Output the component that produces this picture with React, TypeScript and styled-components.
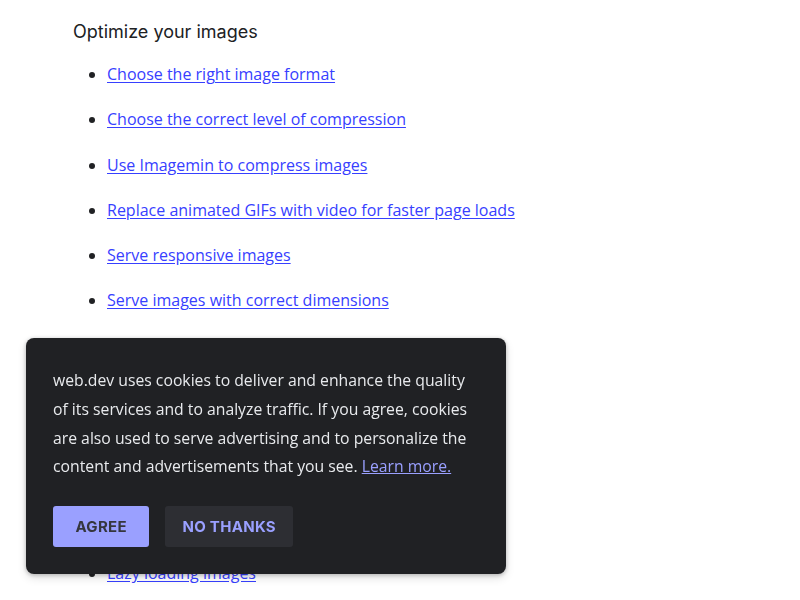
import styled, { createGlobalStyle } from 'styled-components';

const GlobalStyle = createGlobalStyle`
  html, body {
    margin: 0;
    padding: 0;
    background: #ffffff;
  }
  body {
    font-family: 'Open Sans', 'Noto Sans', sans-serif;
    color: #202124;
  }
`;

const Page = styled.main`
  padding: 19px 0 0 73px;
  height: 600px;
  box-sizing: border-box;
  overflow: hidden;
`;

const Section = styled.section<{ offset?: number }>`
  margin-top: ${(p) => p.offset ?? 0}px;
`;

const Heading = styled.h2`
  margin: 0;
  font-family: 'Inter', 'Roboto', sans-serif;
  font-size: 18px;
  font-weight: 400;
  line-height: 26px;
  color: #202124;
`;

const List = styled.ul`
  margin: 16px 0 0;
  padding-left: 34px;
  list-style: disc;
`;

const Item = styled.li`
  font-size: 16px;
  line-height: 26px;
  margin-bottom: 19.3px;
  &::marker {
    color: #202124;
  }
`;

const Link = styled.a`
  color: #3740ff;
  text-decoration: underline;
  text-underline-offset: 2px;
`;

const Banner = styled.aside`
  position: fixed;
  left: 26px;
  bottom: 26px;
  width: 480px;
  box-sizing: border-box;
  padding: 28px 27px 27px;
  background: #202124;
  border-radius: 8px;
  box-shadow: 0 1px 4px rgba(0, 0, 0, 0.25), 0 4px 10px rgba(0, 0, 0, 0.12);
`;

const BannerText = styled.p`
  margin: 0;
  color: #e8eaed;
  font-size: 15.75px;
  line-height: 28.7px;
`;

const BannerLink = styled.a`
  color: #9aa0ff;
  text-decoration: underline;
`;

const Actions = styled.div`
  display: flex;
  gap: 16px;
  margin-top: 25px;
`;

const Button = styled.button<{ primary?: boolean }>`
  height: 41px;
  padding: 0 ${(p) => (p.primary ? 22.5 : 17)}px;
  border: none;
  border-radius: 3px;
  font-family: 'Inter', 'Roboto', sans-serif;
  font-size: 15px;
  font-weight: 700;
  letter-spacing: 0.3px;
  text-transform: uppercase;
  cursor: pointer;
  background: ${(p) => (p.primary ? '#9aa0ff' : '#2d2e33')};
  color: ${(p) => (p.primary ? '#35363e' : '#9aa0ff')};
`;

const imageLinks = [
  'Choose the right image format',
  'Choose the correct level of compression',
  'Use Imagemin to compress images',
  'Replace animated GIFs with video for faster page loads',
  'Serve responsive images',
  'Serve images with correct dimensions',
];

const lazyLinks = ['Browser-level image lazy loading for the web', 'Lazy loading images'];

export default function App() {
  return (
    <>
      <GlobalStyle />
      <Page>
        <Section>
          <Heading>Optimize your images</Heading>
          <List>
            {imageLinks.map((text) => (
              <Item key={text}>
                <Link href="#">{text}</Link>
              </Item>
            ))}
          </List>
        </Section>
        <Section offset={159}>
          <Heading>Lazy load images and video</Heading>
          <List>
            {lazyLinks.map((text) => (
              <Item key={text}>
                <Link href="#">{text}</Link>
              </Item>
            ))}
          </List>
        </Section>
      </Page>
      <Banner>
        <BannerText>
          web.dev uses cookies to deliver and enhance the quality of its services and
          to analyze traffic. If you agree, cookies are also used to serve advertising
          and to personalize the content and advertisements that you see.{' '}
          <BannerLink href="#">Learn more.</BannerLink>
        </BannerText>
        <Actions>
          <Button primary>Agree</Button>
          <Button>No thanks</Button>
        </Actions>
      </Banner>
    </>
  );
}
